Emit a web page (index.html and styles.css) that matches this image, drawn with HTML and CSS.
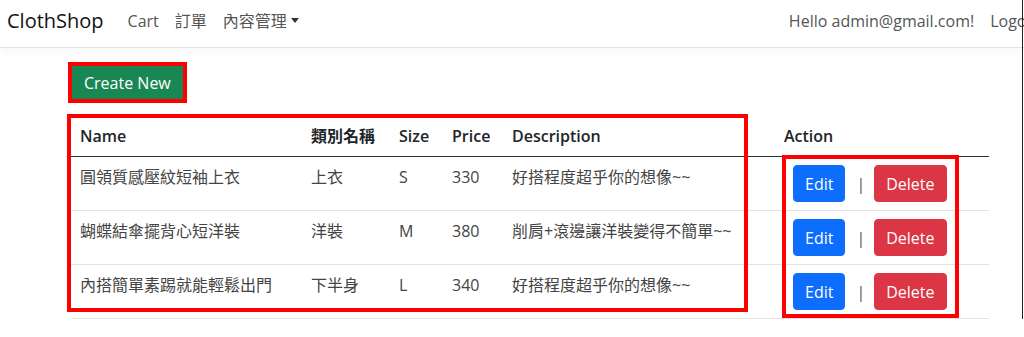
FILE: index.html
```html
<!DOCTYPE html>
<html lang="zh-Hant">
<head>
  <meta charset="UTF-8">
  <title>Index - ClothShop</title>
  <link rel="stylesheet" href="styles.css">
</head>
<body>
  <nav class="navbar">
    <a class="brand" href="#">ClothShop</a>
    <ul class="nav-links">
      <li><a href="#">Cart</a></li>
      <li><a href="#">訂單</a></li>
      <li><a class="dropdown-toggle" href="#">內容管理</a></li>
    </ul>
    <ul class="nav-right">
      <li><a href="#">Hello admin@gmail.com!</a></li>
      <li><a href="#">Logout</a></li>
    </ul>
  </nav>

  <main class="content">
    <p class="toolbar">
      <a class="btn btn-success" href="#">Create New</a>
    </p>
    <table class="table">
      <thead>
        <tr>
          <th class="col-name">Name</th>
          <th class="col-cat">類別名稱</th>
          <th class="col-size">Size</th>
          <th class="col-price">Price</th>
          <th class="col-desc">Description</th>
          <th class="col-action">Action</th>
        </tr>
      </thead>
      <tbody>
        <tr>
          <td>圓領質感壓紋短袖上衣</td>
          <td>上衣</td>
          <td>S</td>
          <td>330</td>
          <td>好搭程度超乎你的想像~~</td>
          <td>
            <div class="row-actions">
              <a class="btn btn-primary" href="#">Edit</a>
              <span class="sep">|</span>
              <a class="btn btn-danger" href="#">Delete</a>
            </div>
          </td>
        </tr>
        <tr>
          <td>蝴蝶結傘擺背心短洋裝</td>
          <td>洋裝</td>
          <td>M</td>
          <td>380</td>
          <td>削肩+滾邊讓洋裝變得不簡單~~</td>
          <td>
            <div class="row-actions">
              <a class="btn btn-primary" href="#">Edit</a>
              <span class="sep">|</span>
              <a class="btn btn-danger" href="#">Delete</a>
            </div>
          </td>
        </tr>
        <tr>
          <td>內搭簡單素踢就能輕鬆出門</td>
          <td>下半身</td>
          <td>L</td>
          <td>340</td>
          <td>好搭程度超乎你的想像~~</td>
          <td>
            <div class="row-actions">
              <a class="btn btn-primary" href="#">Edit</a>
              <span class="sep">|</span>
              <a class="btn btn-danger" href="#">Delete</a>
            </div>
          </td>
        </tr>
      </tbody>
    </table>
  </main>

  <!-- red annotation boxes drawn over the screenshot -->
  <div class="mark mark-create"></div>
  <div class="mark mark-table"></div>
  <div class="mark mark-action"></div>
  <div class="frame-edge"></div>
</body>
</html>
```

FILE: styles.css
```css
body {
  margin: 0;
  position: relative;
  overflow: hidden;
  font-family: "Open Sans", "Noto Sans CJK TC", sans-serif;
  font-size: 16px;
  line-height: 1.5;
  color: #212529;
  background-color: #fff;
}
a {
  text-decoration: none;
}
ul {
  list-style: none;
  margin: 0;
  padding: 0;
}

/* navbar */
.navbar {
  display: flex;
  align-items: flex-start;
  height: 48px;
  box-sizing: border-box;
  padding: 6px 0 0 7px;
  border-bottom: 1px solid #e3e3e3;
  box-shadow: 0 3px 10px rgba(0, 0, 0, 0.04);
  white-space: nowrap;
}
.brand {
  font-size: 20px;
  line-height: 30px;
  color: #111;
  margin-right: 16px;
}
.nav-links,
.nav-right {
  display: flex;
}
.nav-links a,
.nav-right a {
  display: block;
  padding: 0 8px;
  line-height: 30px;
  color: #555;
}
.nav-right {
  margin-left: auto;
  margin-right: -26px;
}
.dropdown-toggle::after {
  content: "";
  display: inline-block;
  margin-left: 4px;
  vertical-align: 4px;
  border-top: 5px solid #333;
  border-left: 4px solid transparent;
  border-right: 4px solid transparent;
}

/* content */
.content {
  padding: 16px 0 0 71px;
}
.toolbar {
  margin: 0 0 15px;
}
.btn {
  display: inline-block;
  box-sizing: border-box;
  height: 37px;
  padding: 0 12px;
  line-height: 36px;
  border: 1px solid transparent;
  border-radius: 4px;
  color: #fff;
  font-size: 16px;
}
.btn-success {
  background-color: #198754;
  border-color: #198754;
}
.btn-primary {
  background-color: #0d6efd;
  border-color: #0d6efd;
}
.btn-danger {
  background-color: #dc3545;
  border-color: #dc3545;
}

.table {
  width: 918px;
  border-collapse: collapse;
}
.table th,
.table td {
  padding: 8px;
  text-align: left;
  vertical-align: top;
}
.table th {
  font-weight: 600;
  border-bottom: 1px solid #333;
}
.table td {
  color: #444;
  border-bottom: 1px solid #e2e2e2;
}
.table th:first-child,
.table td:first-child {
  padding-left: 9px;
}
.col-name { width: 215px; }
.col-cat { width: 72px; }
.col-size { width: 37px; }
.col-price { width: 44px; }
.col-desc { width: 256px; }

.row-actions {
  display: flex;
  align-items: center;
  padding-left: 9px;
}
.row-actions .btn {
  padding: 0 11px;
}
.sep {
  color: #555;
  margin: 0 9px 0 11px;
}

/* annotations */
.mark {
  position: absolute;
  box-sizing: border-box;
  border: 4px solid #ff0000;
}
.mark-create {
  left: 68px;
  top: 62px;
  width: 119px;
  height: 41px;
}
.mark-table {
  left: 67px;
  top: 114px;
  width: 681px;
  height: 198px;
}
.mark-action {
  left: 782px;
  top: 155px;
  width: 177px;
  height: 163px;
}
.frame-edge {
  position: absolute;
  top: 0;
  right: 1px;
  width: 1px;
  height: 337px;
  background-color: #222;
}
```
